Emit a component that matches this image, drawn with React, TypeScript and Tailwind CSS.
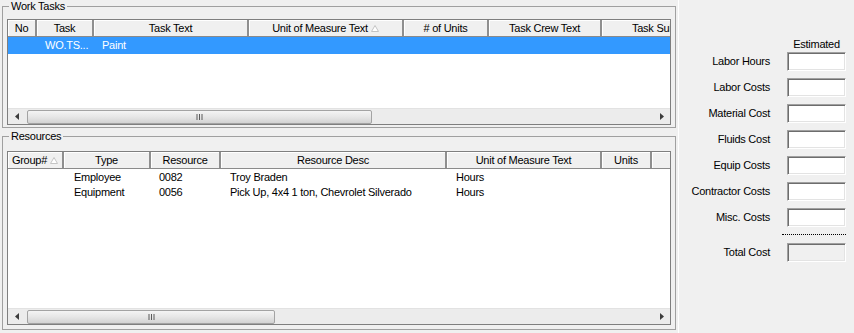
const FONT = 'font-["Liberation_Sans",Arial,sans-serif]'

type Col = { label: string; w: string; sort?: boolean; pad?: string }

const TASK_COLS: Col[] = [
  { label: 'No', w: 'w-[29px]' },
  { label: 'Task', w: 'w-[57px]' },
  { label: 'Task Text', w: 'w-[155px]' },
  { label: 'Unit of Measure Text', w: 'w-[155px]', sort: true },
  { label: '# of Units', w: 'w-[85px]' },
  { label: 'Task Crew Text', w: 'w-[113px]' },
  { label: 'Task Sub Type', w: 'w-[200px]', pad: 'justify-start pl-[30px]' },
]

const RES_COLS: Col[] = [
  { label: 'Group#', w: 'w-[56px]', sort: true },
  { label: 'Type', w: 'w-[87px]' },
  { label: 'Resource', w: 'w-[70px]' },
  { label: 'Resource Desc', w: 'w-[226px]' },
  { label: 'Unit of Measure Text', w: 'w-[155px]' },
  { label: 'Units', w: 'w-[50px]' },
  { label: '', w: 'w-[40px]' },
]

const RESOURCES = [
  { type: 'Employee', res: '0082', desc: 'Troy Braden', uom: 'Hours' },
  { type: 'Equipment', res: '0056', desc: 'Pick Up, 4x4 1 ton, Chevrolet Silverado', uom: 'Hours' },
]

const COSTS = [
  'Labor Hours',
  'Labor Costs',
  'Material Cost',
  'Fluids Cost',
  'Equip Costs',
  'Contractor Costs',
  'Misc. Costs',
]

function SortMark() {
  return (
    <svg width="8" height="7" viewBox="0 0 8 7" className="ml-[3px] shrink-0">
      <path d="M4 0.5 L7.5 6.5 L0.5 6.5 Z" fill="#fff" stroke="#c4c4c4" strokeWidth="1" />
    </svg>
  )
}

function Header({ cols }: { cols: Col[] }) {
  return (
    <div className="flex h-[17px] shrink-0 bg-[#f0f0f0] border-b border-[#8a8a8a]">
      {cols.map((c, i) => (
        <div
          key={i}
          className={`${c.w} shrink-0 flex items-center ${c.pad ?? 'justify-center'} whitespace-nowrap border-r-2 border-[#8f8f8f] shadow-[inset_1px_1px_0_#fff]`}
        >
          {c.label}
          {c.sort && <SortMark />}
        </div>
      ))}
    </div>
  )
}

function Grip() {
  return (
    <svg width="7" height="6" viewBox="0 0 7 6">
      <path d="M1 0v6M3.5 0v6M6 0v6" stroke="#5a5a5a" strokeWidth="1" />
    </svg>
  )
}

function ScrollBar({ thumb }: { thumb: string }) {
  return (
    <div className="flex h-[16px] shrink-0 bg-[#ececec] border-t border-[#e2e2e2]">
      <div className="w-[17px] flex items-center justify-center">
        <svg width="4" height="7" viewBox="0 0 4 7">
          <path d="M4 0 L0 3.5 L4 7 Z" fill="#3c3c3c" />
        </svg>
      </div>
      <div className="flex-1 flex items-center">
        <div
          className={`${thumb} ml-[2px] h-[14px] rounded-[2px] border border-[#a3a3a3] bg-gradient-to-b from-[#f4f4f4] via-[#e6e6e6] to-[#d3d3d3] flex items-center justify-center`}
        >
          <Grip />
        </div>
      </div>
      <div className="w-[17px] flex items-center justify-center">
        <svg width="4" height="7" viewBox="0 0 4 7">
          <path d="M0 0 L4 3.5 L0 7 Z" fill="#3c3c3c" />
        </svg>
      </div>
    </div>
  )
}

function GroupBox({ title, className, children }: { title: string; className: string; children: React.ReactNode }) {
  return (
    <fieldset className={`border border-[#a0a0a0] ${className}`}>
      <legend className="ml-[6px] px-[2px] leading-[13px]">{title}</legend>
      {children}
    </fieldset>
  )
}

function Edit({ disabled }: { disabled?: boolean }) {
  return (
    <div
      className={`w-[59px] h-[19px] border border-t-[#a0a0a0] border-l-[#a0a0a0] border-r-white border-b-white shadow-[inset_1px_1px_0_#6d6d6d,inset_-1px_-1px_0_#e3e3e3] ${
        disabled ? 'bg-[#f0f0f0]' : 'bg-white'
      }`}
    />
  )
}

export default function App() {
  return (
    <div className={`${FONT} w-[854px] h-[333px] bg-[#f0f0f0] text-[11px] tracking-[-0.25px] text-black flex overflow-hidden`}>
      <div className="w-[678px] shrink-0 pl-[2px] flex flex-col">
        <GroupBox title="Work Tasks" className="w-[674px] h-[128px] pb-[2px]">
          <div className="ml-[4px] mt-[6px] w-[664px] h-[106px] border border-[#7f7f7f] bg-white flex flex-col overflow-hidden">
            <Header cols={TASK_COLS} />
            <div className="flex-1">
              <div className="flex h-[17px] items-center bg-[#3399ff] text-white whitespace-nowrap">
                <div className="w-[29px] shrink-0" />
                <div className="w-[57px] shrink-0 pl-[8px]">WO.TS...</div>
                <div className="w-[155px] shrink-0 pl-[8px]">Paint</div>
              </div>
            </div>
            <ScrollBar thumb="w-[345px]" />
          </div>
        </GroupBox>

        <GroupBox title="Resources" className="mt-[2px] w-[674px] h-[200px]">
          <div className="ml-[4px] mt-[8px] w-[664px] h-[174px] border border-[#7f7f7f] bg-white flex flex-col overflow-hidden">
            <Header cols={RES_COLS} />
            <div className="flex-1 pt-[1px]">
              {RESOURCES.map((r) => (
                <div key={r.res} className="flex h-[15px] items-center whitespace-nowrap">
                  <div className="w-[56px] shrink-0" />
                  <div className="w-[87px] shrink-0 pl-[10px]">{r.type}</div>
                  <div className="w-[70px] shrink-0 pl-[8px]">{r.res}</div>
                  <div className="w-[226px] shrink-0 pl-[9px]">{r.desc}</div>
                  <div className="w-[155px] shrink-0 pl-[9px]">{r.uom}</div>
                </div>
              ))}
            </div>
            <ScrollBar thumb="w-[248px]" />
          </div>
        </GroupBox>
      </div>

      <div className="flex-1 border-l border-white pt-[37px] flex flex-col">
        <div className="flex h-[14px] items-center">
          <div className="w-[108px] shrink-0" />
          <div className="w-[59px] text-center">Estimated</div>
        </div>
        <div className="mt-[1px] flex flex-col gap-[7px]">
          {COSTS.map((c) => (
            <div key={c} className="flex items-center">
              <div className="w-[91px] shrink-0 text-right whitespace-nowrap">{c}</div>
              <div className="ml-[17px]">
                <Edit />
              </div>
            </div>
          ))}
        </div>
        <div className="mt-[7px] flex">
          <div className="w-[103px] shrink-0" />
          <div className="w-[64px] border-t border-dotted border-black" />
        </div>
        <div className="mt-[8px] flex items-center">
          <div className="w-[91px] shrink-0 text-right">Total Cost</div>
          <div className="ml-[17px]">
            <Edit disabled />
          </div>
        </div>
      </div>
    </div>
  )
}
